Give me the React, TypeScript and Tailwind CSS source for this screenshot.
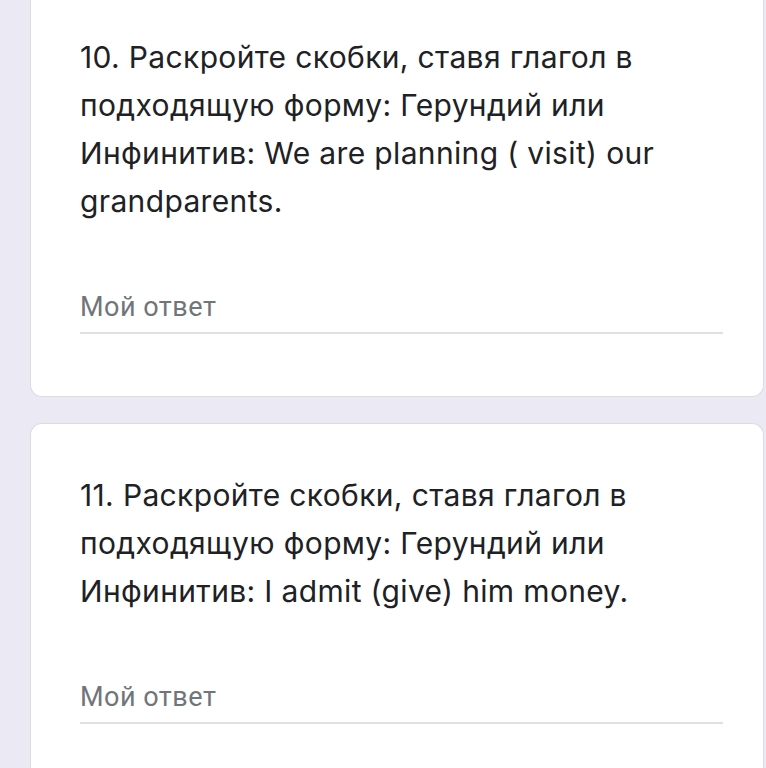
export default function App() {
  const q = "font-['Inter',sans-serif] text-[30px] leading-[48px] text-[#202124] whitespace-nowrap tracking-[0.35px]";
  const a = "font-['Roboto',sans-serif] text-[27px] tracking-[0.5px] text-[#70757a]";
  return (
    <div className="h-[768px] w-[766px] overflow-hidden bg-[#ebe9f4] pl-[30px]">
      <div className="flex w-[734px] flex-col rounded-b-[12px] border border-t-0 border-[#dadce0] bg-white pb-[62px] pl-[49px] pr-[40px] pt-[33px]">
        <div className={q}>
          10. Раскройте скобки, ставя глагол в<br />
          подходящую форму: Герундий или<br />
          Инфинитив: We are planning ( visit) our<br />
          grandparents.
        </div>
        <div className="mt-[57px] flex h-[52px] items-center border-b-2 border-[#e0e0e3]">
          <span className={a}>Мой ответ</span>
        </div>
      </div>
      <div className="mt-[26px] flex w-[734px] flex-col rounded-t-[12px] border border-b-0 border-[#dadce0] bg-white pb-[80px] pl-[49px] pr-[40px] pt-[47px]">
        <div className={q}>
          11. Раскройте скобки, ставя глагол в<br />
          подходящую форму: Герундий или<br />
          Инфинитив: I admit (give) him money.
        </div>
        <div className="mt-[57px] flex h-[52px] items-center border-b-2 border-[#e0e0e3]">
          <span className={a}>Мой ответ</span>
        </div>
      </div>
    </div>
  );
}
